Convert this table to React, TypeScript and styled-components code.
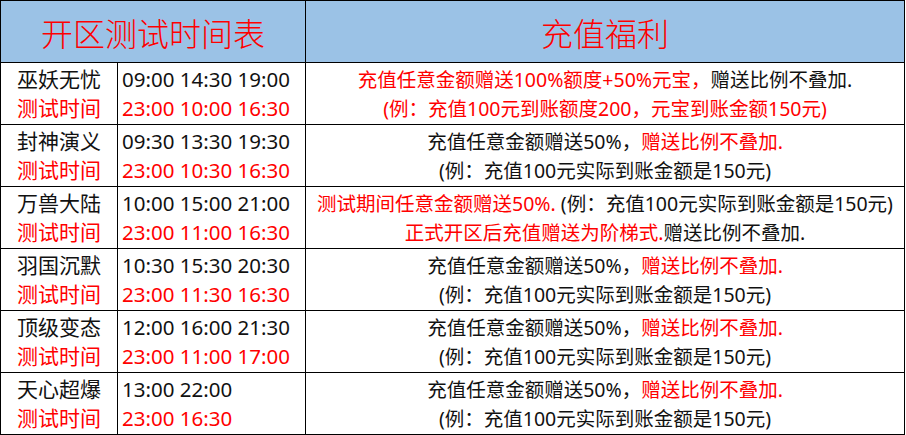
import React from "react";
import styled, { createGlobalStyle } from "styled-components";

const Global = createGlobalStyle`
  html, body { margin: 0; padding: 0; background: #ffffff; }
  body { font-family: "Noto Sans", "Noto Sans CJK SC", sans-serif; }
`;

const Sheet = styled.div`
  display: grid;
  grid-template-columns: 116px 187px 598px;
  grid-auto-rows: 61px;
  gap: 1px;
  padding: 1px;
  width: 905px;
  box-sizing: border-box;
  background: #000000;
`;

const HeadCell = styled.div<{ $span?: number }>`
  grid-column: span ${(p) => p.$span ?? 1};
  background: #9bc2e6;
  color: #ff0000;
  font-family: "Noto Sans CJK SC", sans-serif;
  font-size: 32px;
  font-weight: 300;
  display: flex;
  align-items: center;
  justify-content: center;
`;

const Cell = styled.div<{ $align?: "left" | "center" }>`
  background: #ffffff;
  display: flex;
  flex-direction: column;
  justify-content: center;
  align-items: ${(p) => (p.$align === "left" ? "flex-start" : "center")};
  padding-left: ${(p) => (p.$align === "left" ? "4px" : "0")};
  font-size: 19.5px;
  line-height: 29px;
  white-space: pre;
  color: #111111;
`;

const NameCell = styled(Cell)`
  font-size: 21px;
`;

const TimeCell = styled(Cell)`
  font-size: 20.5px;
`;

const Line = styled.div<{ $red?: boolean }>`
  color: ${(p) => (p.$red ? "#ff0000" : "#111111")};
`;

const R = styled.span`
  color: #ff0000;
`;

type Row = {
  name: string;
  times: string;
  test: string;
  info: React.ReactNode;
};

const std = (
  <>
    <Line>
      充值任意金额赠送50%，<R>赠送比例不叠加.</R>
    </Line>
    <Line>(例：充值100元实际到账金额是150元)</Line>
  </>
);

const rows: Row[] = [
  {
    name: "巫妖无忧",
    times: "09:00 14:30 19:00",
    test: "23:00 10:00 16:30",
    info: (
      <>
        <Line>
          <R>充值任意金额赠送100%额度+50%元宝，</R>赠送比例不叠加.
        </Line>
        <Line $red>(例：充值100元到账额度200，元宝到账金额150元)</Line>
      </>
    ),
  },
  { name: "封神演义", times: "09:30 13:30 19:30", test: "23:00 10:30 16:30", info: std },
  {
    name: "万兽大陆",
    times: "10:00 15:00 21:00",
    test: "23:00 11:00 16:30",
    info: (
      <>
        <Line>
          <R>测试期间任意金额赠送50%.</R>
          {" (例：充值100元实际到账金额是150元)"}
        </Line>
        <Line>
          <R>正式开区后充值赠送为阶梯式.</R>赠送比例不叠加.
        </Line>
      </>
    ),
  },
  { name: "羽国沉默", times: "10:30 15:30 20:30", test: "23:00 11:30 16:30", info: std },
  { name: "顶级变态", times: "12:00 16:00 21:30", test: "23:00 11:00 17:00", info: std },
  { name: "天心超爆", times: "13:00 22:00", test: "23:00 16:30", info: std },
];

export default function App() {
  return (
    <>
      <Global />
      <Sheet>
        <HeadCell $span={2}>开区测试时间表</HeadCell>
        <HeadCell>充值福利</HeadCell>
        {rows.map((r) => (
          <React.Fragment key={r.name}>
            <NameCell>
              <Line>{r.name}</Line>
              <Line $red>测试时间</Line>
            </NameCell>
            <TimeCell $align="left">
              <Line>{r.times}</Line>
              <Line $red>{r.test}</Line>
            </TimeCell>
            <Cell>{r.info}</Cell>
          </React.Fragment>
        ))}
      </Sheet>
    </>
  );
}
